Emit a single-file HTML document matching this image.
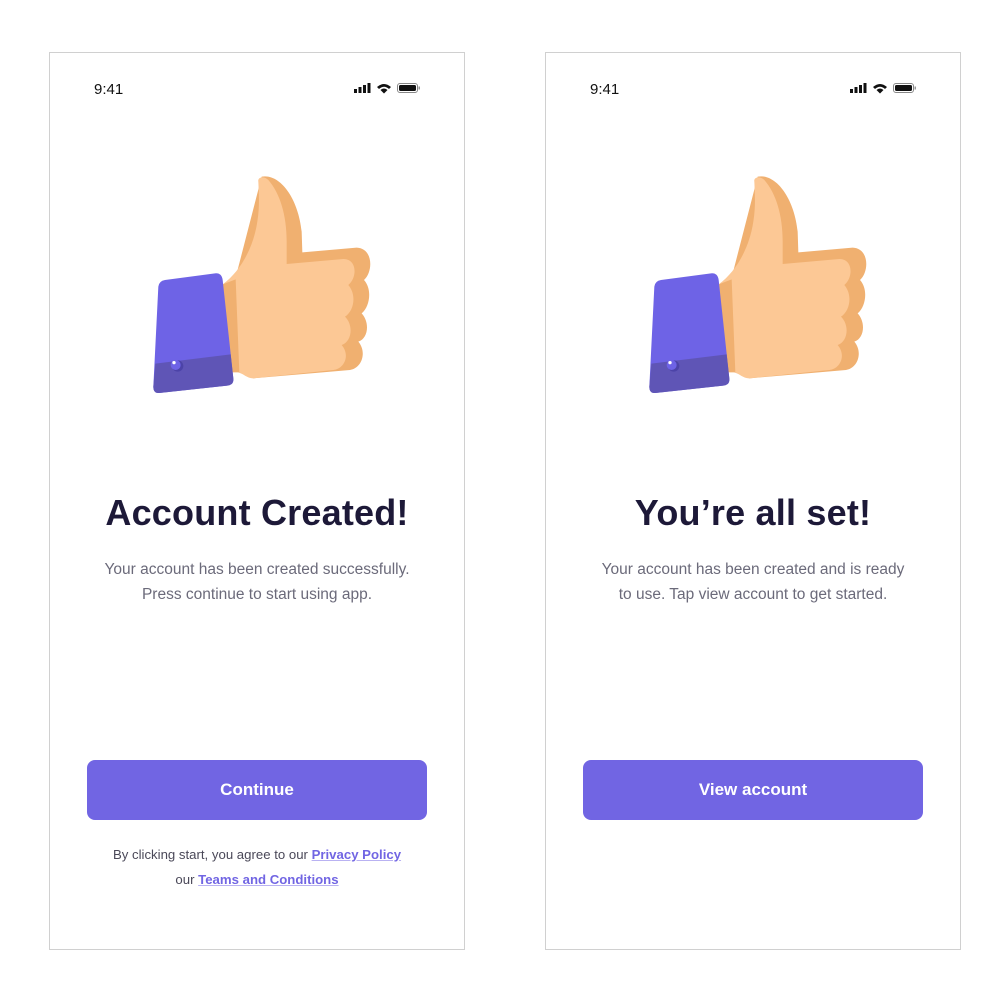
<!DOCTYPE html>
<html><head><meta charset="utf-8"><style>
*{margin:0;padding:0;box-sizing:border-box}
body{width:1002px;height:1002px;background:#fff;position:relative;overflow:hidden;font-family:"Liberation Sans",sans-serif}
.ph{position:absolute;top:52px;width:416px;height:898px;border:1px solid #d0d0d0;background:#fff}
.time{position:absolute;left:44px;top:28px;font-size:15px;color:#111}
.sb{position:absolute;left:303px;top:29px}
.th{position:absolute;left:90px;top:112px}
h1{position:absolute;left:0;width:414px;top:439px;text-align:center;font-size:36px;font-weight:bold;color:#1d1938;letter-spacing:0.2px}
.p{position:absolute;left:0;width:414px;top:504px;text-align:center;font-size:15.5px;line-height:25px;color:#6b6a7a}
.btn{position:absolute;left:37px;top:707px;width:340px;height:60px;border-radius:8px;background:#7165e3;color:#fff;font-weight:bold;font-size:17px;text-align:center;line-height:60px}
.f{position:absolute;left:0;width:414px;top:789px;text-align:center;font-size:13.2px;line-height:25px;color:#4a4858}
.f b{color:#7165e3;text-decoration:underline;text-decoration-color:#b9b2f2}
</style></head><body>

<div class="ph" style="left:49px">
<div class="time">9:41</div>
<svg class="sb" width="70" height="14" viewBox="0 0 70 14"><rect x="1" y="7" width="3" height="4" fill="#111"/><rect x="5.5" y="5" width="3" height="6" fill="#111"/><rect x="10" y="3" width="3" height="8" fill="#111"/><rect x="14.5" y="1" width="3" height="10" fill="#111"/><path d="M24 5 Q31 -1 38 5 L36 7 Q31 2.5 26 7Z M27.5 8 Q31 5 34.5 8 L31 11.5Z" fill="#111"/><rect x="44.5" y="1.5" width="20" height="9" rx="2.5" fill="none" stroke="#888" stroke-width="1"/><rect x="46" y="3" width="17" height="6" rx="1.5" fill="#111"/><rect x="65.5" y="4.5" width="1.5" height="3" fill="#999"/></svg>
<svg class="th" width="240" height="240" viewBox="0 0 720 720">
<path d="M365,35 C420,25 475,100 485,200 L487,262 L650,248 C700,250 700,320 672,345 C697,372 690,425 665,445 C690,472 685,520 655,530 C682,562 665,610 630,615 L340,640 L290,620 L285,345 Z" fill="#f0b070"/>
<path d="M355,50 C352,36 372,32 385,45 C420,85 440,150 440,230 L440,297 L610,282 C652,282 652,338 625,360 C652,392 640,440 615,455 C642,482 635,530 605,540 C632,572 612,612 580,615 L340,640 C320,640 312,627 292,620 L285,345 C262,356 248,358 248,358 C300,320 340,250 352,170 C360,120 356,80 355,50 Z" fill="#fcc895"/>
<path d="M248,358 L287,343 L298,622 L270,622 Z" fill="#f0b070"/>
<path d="M75,345 L225,325 Q245,323 248,345 L280,640 Q282,660 262,662 L58,684 Q40,686 40,665 L55,365 Q57,348 75,345Z" fill="#6e63e6"/>
<path d="M46,596 L272,568 L280,640 Q282,660 262,662 L58,684 Q40,686 40,665Z" fill="#5f55b6"/>
<circle cx="113" cy="603" r="17" fill="#4c43a8"/><circle cx="107" cy="600" r="15" fill="#6e63e6"/><circle cx="102" cy="593" r="5" fill="#fff"/>
</svg>
<h1>Account Created!</h1>
<div class="p">Your account has been created successfully.<br>Press continue to start using app.</div>
<div class="btn">Continue</div>
<div class="f">By clicking start, you agree to our <b>Privacy Policy </b><br>our <b>Teams and Conditions</b></div>
</div>

<div class="ph" style="left:545px">
<div class="time">9:41</div>
<svg class="sb" width="70" height="14" viewBox="0 0 70 14"><rect x="1" y="7" width="3" height="4" fill="#111"/><rect x="5.5" y="5" width="3" height="6" fill="#111"/><rect x="10" y="3" width="3" height="8" fill="#111"/><rect x="14.5" y="1" width="3" height="10" fill="#111"/><path d="M24 5 Q31 -1 38 5 L36 7 Q31 2.5 26 7Z M27.5 8 Q31 5 34.5 8 L31 11.5Z" fill="#111"/><rect x="44.5" y="1.5" width="20" height="9" rx="2.5" fill="none" stroke="#888" stroke-width="1"/><rect x="46" y="3" width="17" height="6" rx="1.5" fill="#111"/><rect x="65.5" y="4.5" width="1.5" height="3" fill="#999"/></svg>
<svg class="th" width="240" height="240" viewBox="0 0 720 720">
<path d="M365,35 C420,25 475,100 485,200 L487,262 L650,248 C700,250 700,320 672,345 C697,372 690,425 665,445 C690,472 685,520 655,530 C682,562 665,610 630,615 L340,640 L290,620 L285,345 Z" fill="#f0b070"/>
<path d="M355,50 C352,36 372,32 385,45 C420,85 440,150 440,230 L440,297 L610,282 C652,282 652,338 625,360 C652,392 640,440 615,455 C642,482 635,530 605,540 C632,572 612,612 580,615 L340,640 C320,640 312,627 292,620 L285,345 C262,356 248,358 248,358 C300,320 340,250 352,170 C360,120 356,80 355,50 Z" fill="#fcc895"/>
<path d="M248,358 L287,343 L298,622 L270,622 Z" fill="#f0b070"/>
<path d="M75,345 L225,325 Q245,323 248,345 L280,640 Q282,660 262,662 L58,684 Q40,686 40,665 L55,365 Q57,348 75,345Z" fill="#6e63e6"/>
<path d="M46,596 L272,568 L280,640 Q282,660 262,662 L58,684 Q40,686 40,665Z" fill="#5f55b6"/>
<circle cx="113" cy="603" r="17" fill="#4c43a8"/><circle cx="107" cy="600" r="15" fill="#6e63e6"/><circle cx="102" cy="593" r="5" fill="#fff"/>
</svg>
<h1>You’re all set!</h1>
<div class="p">Your account has been created and is ready<br>to use. Tap view account to get started.</div>
<div class="btn">View account</div>
</div>

</body></html>
